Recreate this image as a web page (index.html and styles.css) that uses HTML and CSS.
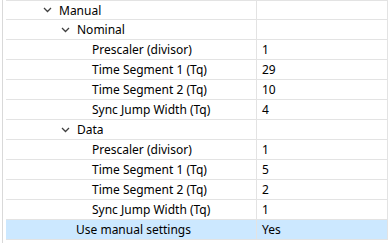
FILE: index.html
```html
<!DOCTYPE html>
<html>
<head>
<meta charset="utf-8">
<link rel="stylesheet" href="styles.css">
</head>
<body>
<div class="frame">
  <div class="grid">
    <div class="row"><div class="name l1"><span class="chev"><svg width="9" height="6" viewBox="0 0 9 6"><path d="M1 1 L4.5 4.5 L8 1" fill="none" stroke="#404040" stroke-width="1.3"/></svg></span>Manual</div><div class="val"></div></div>
    <div class="row"><div class="name l2"><span class="chev"><svg width="9" height="6" viewBox="0 0 9 6"><path d="M1 1 L4.5 4.5 L8 1" fill="none" stroke="#404040" stroke-width="1.3"/></svg></span>Nominal</div><div class="val"></div></div>
    <div class="row"><div class="name l3">Prescaler (divisor)</div><div class="val">1</div></div>
    <div class="row"><div class="name l3">Time Segment 1 (Tq)</div><div class="val">29</div></div>
    <div class="row"><div class="name l3">Time Segment 2 (Tq)</div><div class="val">10</div></div>
    <div class="row"><div class="name l3">Sync Jump Width (Tq)</div><div class="val">4</div></div>
    <div class="row"><div class="name l2"><span class="chev"><svg width="9" height="6" viewBox="0 0 9 6"><path d="M1 1 L4.5 4.5 L8 1" fill="none" stroke="#404040" stroke-width="1.3"/></svg></span>Data</div><div class="val"></div></div>
    <div class="row"><div class="name l3">Prescaler (divisor)</div><div class="val">1</div></div>
    <div class="row"><div class="name l3">Time Segment 1 (Tq)</div><div class="val">5</div></div>
    <div class="row"><div class="name l3">Time Segment 2 (Tq)</div><div class="val">2</div></div>
    <div class="row"><div class="name l3">Sync Jump Width (Tq)</div><div class="val">1</div></div>
    <div class="row sel"><div class="name l2b">Use manual settings</div><div class="val">Yes</div></div>
  </div>
</div>
</body>
</html>
```
FILE: styles.css
```css
html, body {
  margin: 0;
  padding: 0;
  background: #ffffff;
}
body {
  width: 388px;
  height: 243px;
  overflow: hidden;
  font-family: "Noto Sans", "Noto Sans CJK SC", sans-serif;
  font-size: 12px;
  color: #000000;
}
.frame {
  height: 243px;
  margin-left: 2px;
  border-left: 1px solid #d9d9d9;
  padding-left: 3px;
  box-sizing: border-box;
}
.grid {
  border-top: 1px solid #e3e3e3;
  border-right: 1px solid #e3e3e3;
  width: 382px;
  box-sizing: border-box;
}
.row {
  display: grid;
  grid-template-columns: 251px 1fr;
  height: 20px;
  box-sizing: border-box;
  border-bottom: 1px solid #e3e3e3;
}
.row:first-child { height: 19px; }
.name {
  display: flex;
  align-items: center;
  border-right: 1px solid #e3e3e3;
  white-space: nowrap;
}
.val {
  display: flex;
  align-items: center;
  padding-left: 5px;
}
.chev {
  display: inline-flex;
  width: 16px;
  align-items: center;
}
.l1 { padding-left: 37px; }
.l2 { padding-left: 55px; }
.l2b { padding-left: 70px; }
.l3 { padding-left: 86px; }
.sel { background: #cce8ff; }
```
